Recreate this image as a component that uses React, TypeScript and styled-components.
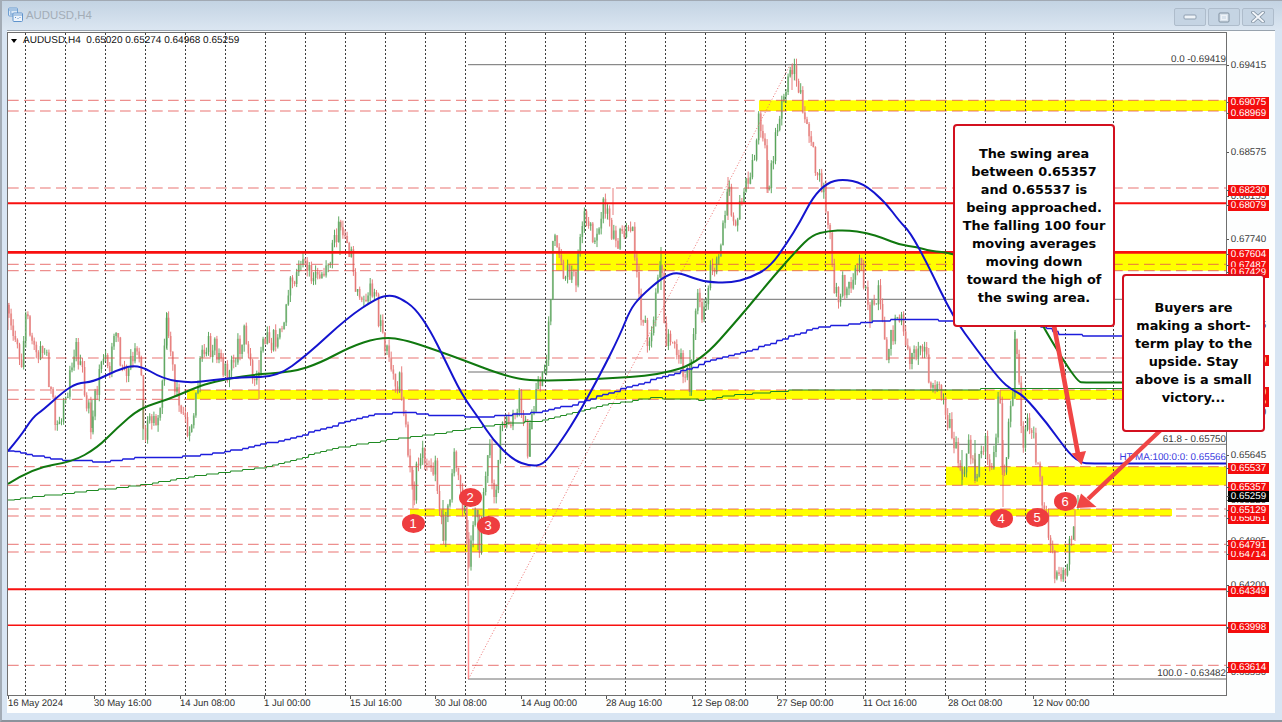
import React from "react";
import styled, { createGlobalStyle } from "styled-components";

type Pt = [number, number];

const Global = createGlobalStyle`
  html, body { margin: 0; padding: 0; background: #d8e4f2; overflow: hidden; }
  #root { width: 1282px; height: 722px; }
`;

const Win = styled.div`
  box-sizing: border-box; width: 1282px; height: 722px;
  display: flex; flex-direction: column;
  padding: 1px 7px 7px 5px;
  background: #d8e5f3;
  border-left: 2px solid #a3acb6;
  border-bottom: 2px solid #8b939c;
  box-shadow: inset 0 1px 0 #a1a9b3;
  font-family: "Liberation Sans", Arial, sans-serif;
`;
const TitleBar = styled.header`
  height: 29px; flex: none; display: flex; align-items: center; justify-content: space-between;
  margin: 0 -7px 0 -5px; padding: 0 8px 2px 6px; box-sizing: border-box;
  background: linear-gradient(#c3d3e3, #dbe6f1);
`;
const TitleLeft = styled.div`display: flex; align-items: center; gap: 3px;`;
const TitleText = styled.span`font-size: 11.4px; color: #a3adb7; letter-spacing: 0;`;
const Controls = styled.div`display: flex; gap: 2px; padding-top: 5px;`;
const CtlButton = styled.div`
  width: 32px; height: 18px; box-sizing: border-box; display: flex; align-items: center; justify-content: center;
  background: #c5d4e3; border: 1px solid #aebccb; border-radius: 2px;
`;
const Panel = styled.main`
  position: relative; flex: 1; min-height: 0; display: flex; flex-direction: column;
  background: #fdfefe; border-top: 1px solid #98a3ae; padding-top: 1px;
`;
const ChartRow = styled.div`display: flex; height: 664px; flex: none;`;
const Plot = styled.div`
  box-sizing: border-box; width: 1220px; height: 664px; flex: none;
  border: 1px solid #6f6f6f; background: #fff;
`;
const PlotSvg = styled.svg`display: block; width: 1218px; height: 662px;`;
const Candles = styled.g`filter: blur(0.35px);`;
const PriceAxis = styled.div`position: relative; flex: 1;`;
const AxisText = styled.div`
  position: absolute; left: 1px; width: 41px; height: 11px; text-align: center;
  font-size: 9.8px; line-height: 11px; color: #3c3c3c; text-rendering: geometricPrecision;
  &::before { content: ""; position: absolute; left: -1px; top: 5px; width: 2px; height: 1px; background: #555; }
`;
const AxisTag = styled(AxisText)<{ $black?: boolean }>`
  color: #fff; background: ${(p) => (p.$black ? "#000" : "#f40d0d")};
`;
const TimeAxis = styled.div`position: relative; flex: 1;`;
const TimeLabel = styled.span`
  position: absolute; top: 2px; font-size: 9.5px; line-height: 12px; color: #2f2f2f; white-space: nowrap;
  text-rendering: geometricPrecision;
  &::before { content: ""; position: absolute; left: 0; top: -2px; width: 1px; height: 3px; background: #555; }
`;
const Overlay = styled.div`position: absolute; inset: 0; pointer-events: none; z-index: 2;`;
const Legend = styled.div`
  position: absolute; left: 4px; top: 4px; display: flex; align-items: center; gap: 6px;
  font-size: 10px; line-height: 11px; color: #111; white-space: pre; text-rendering: geometricPrecision;
`;
const Caret = styled.i`
  width: 0; height: 0; border-left: 3.5px solid transparent; border-right: 3.5px solid transparent;
  border-top: 4px solid #000;
`;
const ChartNote = styled.div<{ $blue?: boolean }>`
  position: absolute; right: 49px; font-size: 9.8px; line-height: 11px; white-space: nowrap;
  text-rendering: geometricPrecision;
  color: ${(p) => (p.$blue ? "#3a3ae0" : "#3a3a3a")};
`;
const Badge = styled.div`
  position: absolute; width: 23px; height: 19px; border-radius: 50%;
  background: #ee3d3f; color: #fff; font-size: 13px; line-height: 19px; text-align: center;
`;
const ArrowLayer = styled.svg`position: absolute; left: 0; top: 0; width: 1268px; height: 682px;`;
const Callout = styled.div<{ $l: number; $t: number; $w: number; $h: number }>`
  position: absolute; box-sizing: border-box; display: flex; flex-direction: column; justify-content: center;
  left: ${(p) => p.$l}px; top: ${(p) => p.$t}px; width: ${(p) => p.$w}px; height: ${(p) => p.$h}px;
  background: #fff; border: 2px solid #d3101f; border-radius: 4px;
  font-family: "DejaVu Sans", Verdana, sans-serif; font-weight: 700; font-size: 12.85px; line-height: 18px;
  color: #050505; text-align: center;
`;
const CalloutLine = styled.div`white-space: nowrap;`;

const O = { x: 7, y: 31 };

const closes: Pt[] = [[8,305],[12,335],[18,345],[22,365],[26,308],[30,335],[36,350],[42,345],[47,365],[52,400],[58,428],[62,415],[68,385],[74,345],[80,365],[85,395],[92,423],[98,385],[103,352],[110,370],[115,325],[120,360],[128,375],[135,355],[140,342],[144,440],[150,420],[160,410],[167,315],[172,360],[180,410],[190,432],[197,395],[200,365],[208,342],[220,355],[228,375],[245,332],[255,390],[262,345],[270,345],[285,325],[288,285],[305,262],[320,282],[330,258],[340,225],[348,240],[355,285],[362,300],[375,292],[385,345],[392,370],[400,385],[407,440],[413,495],[417,470],[422,455],[435,470],[443,535],[450,490],[455,460],[462,490],[465,515],[469,570],[475,500],[479,545],[485,480],[490,450],[495,505],[500,430],[510,425],[520,400],[528,445],[535,395],[545,370],[551,293],[553,240],[560,262],[575,285],[583,215],[595,242],[603,203],[612,235],[622,240],[633,225],[640,310],[650,345],[661,255],[665,330],[680,360],[690,385],[697,290],[705,320],[710,275],[720,250],[728,185],[735,225],[745,192],[752,165],[760,120],[764,140],[768,190],[778,130],[785,85],[792,68],[800,92],[805,120],[810,135],[815,170],[822,180],[825,205],[830,240],[835,295],[850,285],[855,270],[860,262],[870,310],[880,300],[885,352],[900,315],[910,360],[925,340],[930,395],[940,380],[945,420],[955,445],[962,480],[970,440],[975,475],[985,440],[992,470],[1000,395],[1003,495],[1008,430],[1012,405],[1015,345],[1020,380],[1022,455],[1025,420],[1032,435],[1038,465],[1043,505],[1048,530],[1052,558],[1058,578],[1062,570],[1065,578],[1068,560],[1072,535],[1075,512],[1079,510]];

const spikes: [number, number, number, boolean][] = [
  [413,470,508,false],[443,500,541,true],[468,520,586,false],[478,510,550,true],[530,420,457,true],
  [613,215,188,false],[661,290,247,true],[690,350,396,true],[259,360,399,false],[728,220,177,false],
  [1003,440,507,false],[1015,380,330,true],[962,450,485,true],[975,440,481,true],[1078,510,495,true],
  [1075,510,541,false],[143,400,440,true],[92,400,428,true],[167,350,313,true],[340,255,222,true],
  [792,90,65,false],[768,160,193,false],[8,330,303,false],
];

function valueAt(x: number): number {
  for (let i = 1; i < closes.length; i++) {
    if (x <= closes[i][0]) {
      const [x0, y0] = closes[i - 1];
      const [x1, y1] = closes[i];
      return y0 + ((y1 - y0) * (x - x0)) / (x1 - x0);
    }
  }
  return closes[closes.length - 1][1];
}

function buildCandles() {
  let s = 12345;
  const rnd = () => { s = (s * 1103515245 + 12345) & 0x7fffffff; return s / 0x7fffffff; };
  const p = { upBody: "", dnBody: "", upWick: "", dnWick: "" };
  const step = 2.1;
  let prev = valueAt(8);
  for (let x = 9; x < 1074; x += step) {
    const wave = Math.sin(x * 1.05) * 7 + Math.sin(x * 0.37) * 4;
    const c = valueAt(x) + wave + (rnd() - 0.5) * 12;
    const hi = Math.min(prev, c) - rnd() * 7;
    const lo = Math.max(prev, c) + rnd() * 7;
    const up = c < prev;
    const X = x.toFixed(1);
    const body = `M${X} ${prev.toFixed(1)}V${c.toFixed(1)}`;
    const wick = `M${X} ${hi.toFixed(1)}V${lo.toFixed(1)}`;
    if (up) { p.upBody += body; p.upWick += wick; } else { p.dnBody += body; p.dnWick += wick; }
    prev = c;
  }
  for (const [x, a, b, up] of spikes) {
    const d = `M${x} ${a}V${b}`;
    if (up) p.upWick += d; else p.dnWick += d;
  }
  return p;
}
const candlePaths = buildCandles();

function smooth(pts: Pt[]): string {
  let d = `M${pts[0][0]} ${pts[0][1]}`;
  for (let i = 1; i < pts.length - 1; i++) {
    const mx = (pts[i][0] + pts[i + 1][0]) / 2;
    const my = (pts[i][1] + pts[i + 1][1]) / 2;
    d += `Q${pts[i][0]} ${pts[i][1]} ${mx} ${my}`;
  }
  const l = pts[pts.length - 1];
  return d + `L${l[0]} ${l[1]}`;
}

function stairs(pts: Pt[]): string {
  const at = (x: number) => {
    for (let i = 1; i < pts.length; i++) {
      if (x <= pts[i][0]) {
        const [a, b] = pts[i - 1];
        const [c, e] = pts[i];
        return b + ((e - b) * (x - a)) / (c - a);
      }
    }
    return pts[pts.length - 1][1];
  };
  const end = pts[pts.length - 1][0];
  let d = `M${pts[0][0]} ${pts[0][1]}`;
  let last = pts[0][1];
  for (let x = pts[0][0] + 6; x <= end; x += 6) {
    const y = Math.round(at(x) / 1.5) * 1.5;
    d += `L${x} ${last}`;
    if (y !== last) d += `L${x + 1} ${y}`;
    last = y;
  }
  return d;
}

const blueFast: Pt[] = [[8,451],[20,437],[33,417],[43,410],[63,392],[77,383],[93,382],[117,370],[138,364],[163,379],[190,383],[213,380],[243,377],[277,377],[307,355],[347,318],[377,298],[390,295],[400,298],[415,308],[430,330],[445,360],[462,395],[480,420],[493,440],[513,460],[530,466],[543,465],[557,447],[575,420],[600,375],[620,335],[630,310],[640,297],[663,277],[677,272],[693,278],[707,282],[730,283],[750,278],[770,267],[787,243],[800,222],[813,197],[827,183],[842,179],[863,183],[885,202],[900,222],[910,232],[927,263],[953,317],[977,350],[1000,380],[1012,390],[1023,395],[1047,423],[1070,455],[1082,463],[1090,463.5],[1226,463.5]];
const blueSlow: Pt[] = [[8,451],[40,457],[63,460],[100,462],[133,458],[160,458],[200,455],[233,450],[267,443],[300,435],[333,425],[367,415],[400,412],[430,415],[480,417],[530,413],[570,405],[600,395],[640,383],[690,368],[700,363],[743,352],[787,337],[813,328],[867,322],[900,319],[953,321],[1000,323],[1043,327],[1058,334],[1067,335],[1125,336]];
const greenFast: Pt[] = [[8,484],[33,468],[72,462],[97,448],[117,428],[140,408],[167,400],[197,387],[213,382],[247,375],[293,372],[320,363],[350,347],[377,338],[400,338],[450,355],[510,378],[540,381],[600,379],[660,375],[700,362],[740,317],[773,277],[797,250],[812,235],[828,231],[847,230],[867,233],[883,238],[900,245],[917,247],[930,251],[953,253],[990,270],[1030,300],[1043,327],[1077,382],[1085,382.5],[1125,382.5]];
const greenSlow: Pt[] = [[8,500],[67,493],[140,485],[200,475],[267,467],[333,448],[400,438],[413,437],[490,425],[545,420],[600,405],[650,398],[700,400],[733,395],[780,391],[807,390],[917,390],[1000,389],[1067,389],[1125,388]];

const gridXs = [...Array.from({ length: 27 }, (_, k) => 25.5 + 40 * k), 1113.5];
const dashed = [100.3, 111, 188, 264.3, 270.7, 358, 390, 399.3, 466.7, 485.3, 509, 516, 544.3, 552, 665.3];
const solidRed: [number, number][] = [[203.3, 1.9], [252.3, 2.8], [589.3, 1.9], [625.3, 1.6]];
const fibs: [number, number][] = [[64.7, 468], [299.3, 468], [372, 468], [444.3, 468], [679, 468]];
const zones: [number, number, number, number][] = [
  [759, 1226, 100.3, 111],
  [556, 1226, 252.3, 270.7],
  [187, 1226, 390, 399.3],
  [946, 1226, 466.7, 485.3],
  [410, 1172, 509, 516],
  [430, 1112, 544.3, 552],
];

const axisGray: [string, number][] = [
  ["0.69415", 65.7], ["0.68575", 152.5], ["0.68155", 196], ["0.67740", 239], ["0.66905", 325.6],
  ["0.66070", 412], ["0.65645", 455.7], ["0.65220", 500], ["0.64805", 541], ["0.64200", 585.5],
  ["0.63965", 628], ["0.63550", 672],
];
const axisTags: [string, number][] = [
  ["0.63614", 667], ["0.63998", 627.5], ["0.64349", 591], ["0.64714", 554], ["0.64791", 545.5],
  ["0.65061", 518], ["0.65129", 510], ["0.65357", 487], ["0.65537", 468.5], ["0.66165", 401],
  ["0.66250", 392], ["0.66560", 360], ["0.67487", 265.5], ["0.67429", 272.5], ["0.67604", 254.7],
  ["0.68079", 205], ["0.68230", 190], ["0.68969", 113], ["0.69075", 102.5],
];
const timeLabels: [string, number][] = [
  ["16 May 2024", 8], ["30 May 16:00", 94], ["14 Jun 08:00", 180], ["1 Jul 00:00", 264], ["15 Jul 16:00", 350],
  ["30 Jul 08:00", 435], ["14 Aug 00:00", 521], ["28 Aug 16:00", 606], ["12 Sep 08:00", 692], ["27 Sep 00:00", 777],
  ["11 Oct 16:00", 863], ["28 Oct 08:00", 948], ["12 Nov 00:00", 1033],
];
const notes: [string, number, boolean][] = [
  ["0.0 -0.69419", 59, false],
  ["61.8 - 0.65750", 439, false],
  ["HT MA:100:0:0: 0.65566", 457.5, true],
  ["100.0 - 0.63482", 673.5, false],
];
const badges: [string, number, number][] = [
  ["1", 413, 523], ["2", 470, 497], ["3", 488, 525], ["4", 1001, 518], ["5", 1037, 517], ["6", 1065, 501],
];
const swingLines = [
  "The swing area", "between 0.65357", "and 0.65537 is", "being approached.", "The falling 100 four",
  "moving averages", "moving down", "toward the high of", "the swing area.",
];
const buyerLines = ["Buyers are", "making a short-", "term play to the", "upside. Stay", "above is a small", "victory..."];

const WindowIcon = () => (
  <svg width="15" height="15" viewBox="0 0 15 15" fill="none">
    <rect x="0.5" y="1" width="9" height="8" rx="1" fill="#dbe8f5" stroke="#6f9fd2" />
    <rect x="5" y="6" width="9.5" height="8.5" rx="1" fill="#eef4fb" stroke="#5f93cc" />
    <path d="M1 3h8M5.5 8h8.5" stroke="#6f9fd2" />
    <path d="M2 5h1.5M2 7h3M7 10.5h1M9.5 11.5h1M11.5 10.5h1" stroke="#5f93cc" />
  </svg>
);
const MinGlyph = () => (
  <svg width="14" height="6" viewBox="0 0 14 6"><rect x="1" y="1" width="12" height="4" rx="1" fill="#eef3f8" stroke="#8f9fb0" /></svg>
);
const MaxGlyph = () => (
  <svg width="12" height="11" viewBox="0 0 12 11" fill="none">
    <rect x="1" y="1" width="10" height="9" rx="1" fill="#d9e3ed" stroke="#7f8f9f" />
    <rect x="3.5" y="3.5" width="5" height="4" stroke="#eef3f8" />
  </svg>
);
const CloseGlyph = () => (
  <svg width="14" height="12" viewBox="0 0 14 12" fill="none">
    <path d="M2 1.5l10 9M12 1.5l-10 9" stroke="#7f8f9f" strokeWidth="3.6" strokeLinecap="round" />
    <path d="M2 1.5l10 9M12 1.5l-10 9" stroke="#f3f6fa" strokeWidth="2" strokeLinecap="round" />
  </svg>
);

const ARROW = "#f04545";

export default function App() {
  return (
    <>
      <Global />
      <Win>
        <TitleBar>
          <TitleLeft>
            <WindowIcon />
            <TitleText>AUDUSD,H4</TitleText>
          </TitleLeft>
          <Controls>
            <CtlButton><MinGlyph /></CtlButton>
            <CtlButton><MaxGlyph /></CtlButton>
            <CtlButton><CloseGlyph /></CtlButton>
          </Controls>
        </TitleBar>
        <Panel>
          <ChartRow>
            <Plot>
              <PlotSvg viewBox="8 33 1218 662">
                {zones.map(([a, b, t, u]) => (
                  <rect key={a} x={a} y={t} width={b - a} height={u - t} fill="#ffff00" />
                ))}
                {gridXs.map((x) => (
                  <line key={x} x1={x} x2={x} y1={33} y2={695} stroke="#3d3d3d" strokeWidth="1" strokeDasharray="2 2" />
                ))}
                {fibs.map(([y, x]) => (
                  <line key={y} x1={x} x2={1226} y1={y} y2={y} stroke="#6e6e6e" strokeWidth="1" />
                ))}
                <Candles>
                  <path d={candlePaths.dnBody} stroke="#eaa09e" strokeWidth="2" fill="none" opacity="0.8" />
                  <path d={candlePaths.upBody} stroke="#9cc49b" strokeWidth="2" fill="none" opacity="0.8" />
                  <path d={candlePaths.dnWick} stroke="#e5706f" strokeWidth="0.9" fill="none" />
                  <path d={candlePaths.upWick} stroke="#4d9f50" strokeWidth="0.9" fill="none" />
                </Candles>
                <line x1={468.5} x2={468.5} y1={589} y2={679} stroke="#ff8d8d" strokeWidth="1.5" />
                <line x1={468.5} y1={679} x2={790} y2={65} stroke="#ee7272" strokeWidth="1" strokeDasharray="1 2" />
                {dashed.map((y) => (
                  <line key={y} x1={8} x2={1226} y1={y} y2={y} stroke="#e4504f" strokeOpacity="0.8" strokeWidth="1" strokeDasharray="10.7 5.3" />
                ))}
                {solidRed.map(([y, w]) => (
                  <line key={y} x1={8} x2={1226} y1={y} y2={y} stroke="#f8100f" strokeWidth={w} />
                ))}
                <path d={stairs(greenSlow)} fill="none" stroke="#1f8a22" strokeWidth="1.2" />
                <path d={stairs(blueSlow)} fill="none" stroke="#1c1cdc" strokeWidth="1.3" />
                <path d={smooth(greenFast)} fill="none" stroke="#10780f" strokeWidth="2" strokeLinejoin="round" />
                <path d={smooth(blueFast)} fill="none" stroke="#1414cf" strokeWidth="2" strokeLinejoin="round" />
              </PlotSvg>
            </Plot>
            <PriceAxis>
              {axisGray.map(([t, c]) => (
                <AxisText key={t} style={{ top: c - 32 - 5.5 }}>{t}</AxisText>
              ))}
              {axisTags.map(([t, c]) => (
                <AxisTag key={t} style={{ top: c - 32 - 5.5 }}>{t}</AxisTag>
              ))}
              <AxisTag $black style={{ top: 496.5 - 32 - 5.5 }}>0.65259</AxisTag>
            </PriceAxis>
          </ChartRow>
          <TimeAxis>
            {timeLabels.map(([t, x]) => (
              <TimeLabel key={t} style={{ left: x - O.x }}>{t}</TimeLabel>
            ))}
          </TimeAxis>
          <Overlay>
            <Legend>
              <Caret />
              <span>AUDUSD,H4  0.65020 0.65274 0.64968 0.65259</span>
            </Legend>
            {notes.map(([t, c, blue]) => (
              <ChartNote key={t} $blue={blue} style={{ top: c - O.y - 5.5 }}>{t}</ChartNote>
            ))}
            {badges.map(([t, x, y]) => (
              <Badge key={t} style={{ left: x - O.x - 11.5, top: y - O.y - 9.5 }}>{t}</Badge>
            ))}
            <ArrowLayer viewBox="7 31 1268 682">
              <line x1={1053} y1={320} x2={1078} y2={454} stroke={ARROW} strokeWidth="4.6" />
              <polygon points="1081.5,465 1071.5,453.5 1086,451" fill={ARROW} />
              <line x1={1165} y1={426} x2={1088} y2={499} stroke={ARROW} strokeWidth="4.4" />
              <polygon points="1076.5,508 1081,493.5 1096.5,507" fill={ARROW} />
            </ArrowLayer>
            <Callout $l={953 - O.x} $t={124 - O.y} $w={162} $h={203}>
              {swingLines.map((l) => <CalloutLine key={l}>{l}</CalloutLine>)}
            </Callout>
            <Callout $l={1122 - O.x} $t={274 - O.y} $w={143} $h={158}>
              {buyerLines.map((l) => <CalloutLine key={l}>{l}</CalloutLine>)}
            </Callout>
          </Overlay>
        </Panel>
      </Win>
    </>
  );
}
